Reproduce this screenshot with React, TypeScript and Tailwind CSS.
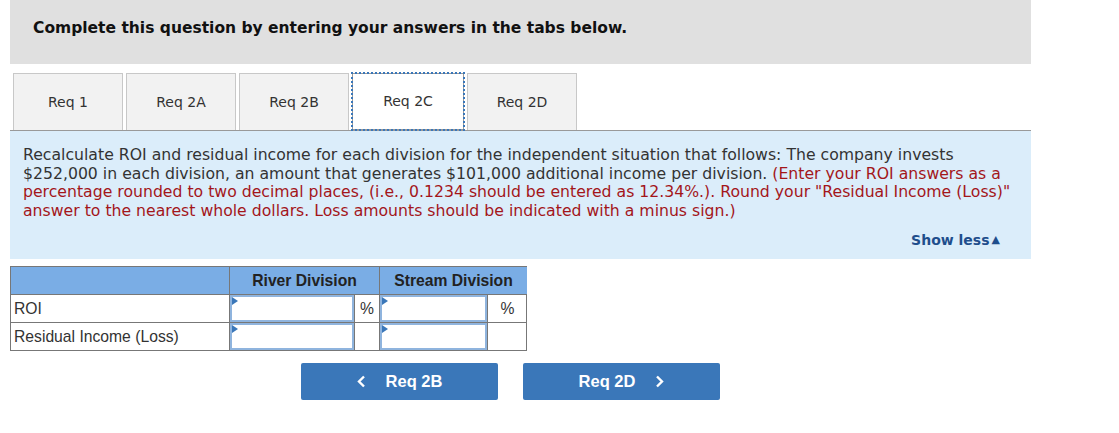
import React from 'react';

const tabs = ['Req 1', 'Req 2A', 'Req 2B', 'Req 2C', 'Req 2D'];

function AnswerInput() {
  return (
    <div className="relative h-full border-2 border-[#8fb4de] bg-white">
      <span className="absolute left-0 top-0 h-0 w-0 border-y-[4px] border-l-[6px] border-y-transparent border-l-[#3a77b9]" />
    </div>
  );
}

function Chevron({ dir }: { dir: 'left' | 'right' }) {
  return (
    <svg width="9" height="13" viewBox="0 0 9 13" className="shrink-0">
      <polyline
        points={dir === 'left' ? '7,1.5 2,6.5 7,11.5' : '2,1.5 7,6.5 2,11.5'}
        fill="none"
        stroke="white"
        strokeWidth="2.4"
      />
    </svg>
  );
}

export default function App() {
  return (
    <div className="w-[1119px] h-[433px] bg-white font-['DejaVu_Sans',Verdana,sans-serif]">
      <div className="ml-[10px] w-[1021px]">
        <div className="h-[64px] bg-[#e0e0e0] pl-[23px] pt-[17px] text-[15.5px] font-bold text-[#111]">
          Complete this question by entering your answers in the tabs below.
        </div>

        <div className="mt-[9px] flex h-[58px] gap-[3px] border-b border-[#999] pl-[3px]">
          {tabs.map((t) => {
            const active = t === 'Req 2C';
            return (
              <div
                key={t}
                className={
                  active
                    ? 'flex w-[112px] items-center justify-center border border-[#999] bg-white text-[14px] text-[#333] outline-2 outline-dotted outline-[#3a77b9] -outline-offset-1'
                    : 'flex w-[110px] items-center justify-center border border-b-0 border-[#c8c8c8] bg-[#f2f2f2] text-[14px] text-[#333]'
                }
              >
                {t}
              </div>
            );
          })}
        </div>

        <div className="h-[128px] bg-[#dbedfa] px-[13px] pt-[15px] text-[15.7px] leading-[18.5px] text-[#333]">
          <p>
            Recalculate ROI and residual income for each division for the independent situation that follows: The company invests
            <br />
            $252,000 in each division, an amount that generates $101,000 additional income per division.{' '}
            <span className="text-[#a3161a]">
              (Enter your ROI answers as a
              <br />
              percentage rounded to two decimal places, (i.e., 0.1234 should be entered as 12.34%.). Round your "Residual Income (Loss)"
              <br />
              answer to the nearest whole dollars. Loss amounts should be indicated with a minus sign.)
            </span>
          </p>
          <div className="mt-[11px] flex items-center justify-end pr-[18px] text-[14px] font-bold text-[#1f4e8c]">
            Show less
            <span className="ml-[2px] text-[11px]">▲</span>
          </div>
        </div>

        <div className="mt-[7px] w-[517px] font-['Liberation_Sans',Arial,sans-serif] text-[15.7px]">
          <div className="grid grid-cols-[218px_125px_25px_108px_40px] border border-[#777]">
            <div className="h-[28px] border-b border-[#777] bg-[#7aade5]" />
            <div className="col-span-2 flex h-[28px] items-center justify-center border-b border-l border-[#777] bg-[#7aade5] font-bold text-[#222]">
              River Division
            </div>
            <div className="col-span-2 flex h-[28px] items-center justify-center border-b border-l border-[#777] bg-[#7aade5] font-bold text-[#222]">
              Stream Division
            </div>

            <div className="flex h-[28px] items-center border-b border-[#777] pl-[3px] text-[#333]">ROI</div>
            <div className="h-[28px] border-b border-l border-[#777]">
              <AnswerInput />
            </div>
            <div className="flex h-[28px] items-center justify-center border-b border-l border-[#777] text-[#333]">%</div>
            <div className="h-[28px] border-b border-l border-[#777]">
              <AnswerInput />
            </div>
            <div className="flex h-[28px] items-center justify-center border-b border-l border-[#777] text-[#333]">%</div>

            <div className="flex h-[27px] items-center pl-[3px] text-[#333]">Residual Income (Loss)</div>
            <div className="h-[27px] border-l border-[#777]">
              <AnswerInput />
            </div>
            <div className="h-[27px] border-l border-[#777]" />
            <div className="h-[27px] border-l border-[#777]">
              <AnswerInput />
            </div>
            <div className="h-[27px] border-l border-[#777]" />
          </div>
        </div>

        <div className="mt-[12px] flex gap-[25px] pl-[291px] font-['Liberation_Sans',Arial,sans-serif] text-[16.5px] font-bold text-white">
          <button className="flex h-[37px] w-[197px] items-center justify-center gap-[20px] rounded-[2px] bg-[#3a77b9]">
            <Chevron dir="left" />
            <span>Req 2B</span>
          </button>
          <button className="flex h-[37px] w-[197px] items-center justify-center gap-[20px] rounded-[2px] bg-[#3a77b9]">
            <span>Req 2D</span>
            <Chevron dir="right" />
          </button>
        </div>
      </div>
    </div>
  );
}
